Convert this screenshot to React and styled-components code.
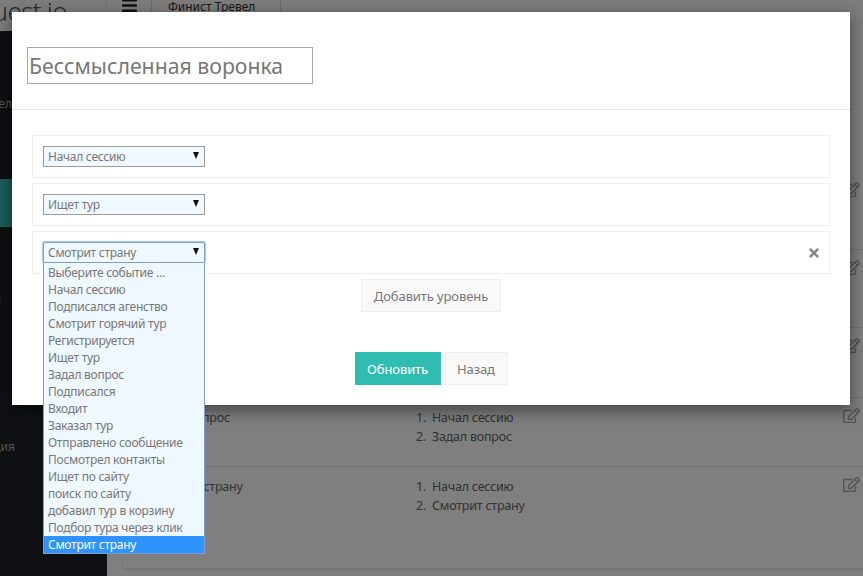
import React from "react";
import styled, { createGlobalStyle } from "styled-components";
import { FaBars, FaRegEdit, FaTimes } from "react-icons/fa";

const Global = createGlobalStyle`
  html, body { margin: 0; padding: 0; height: 100%; overflow: hidden; background: #fff; }
  body { font-family: "Noto Sans", "Open Sans", sans-serif; color: #777; }
  * { box-sizing: border-box; }
`;

const Page = styled.div`
  position: relative;
  width: 863px;
  height: 576px;
  overflow: hidden;
  display: flex;
  flex-direction: column;
  background: #fff;
`;
const Header = styled.header`
  height: 31px;
  flex: none;
  display: flex;
  align-items: stretch;
  background: #fafafa;
`;
const Logo = styled.div`
  width: 107px;
  flex: none;
  overflow: hidden;
  display: flex;
  justify-content: flex-end;
  align-items: flex-start;
  padding-right: 39px;
  font-size: 26px;
  line-height: 22px;
  font-weight: 300;
  letter-spacing: -0.6px;
  color: #555;
  white-space: nowrap;
  border-right: 1px solid #e6e6e6;
`;
const Burger = styled.div`
  width: 45px;
  flex: none;
  display: flex;
  justify-content: center;
  border-right: 1px solid #ddd;
  font-size: 17px;
  color: #222;
  line-height: 0;
  svg { margin-top: -3px; }
`;
const Tab = styled.div`
  width: 129px;
  flex: none;
  padding-left: 16px;
  font-size: 12px;
  line-height: 14px;
  color: #333;
  border-right: 1px solid #ddd;
`;
const Body = styled.div`
  flex: 1;
  display: flex;
  min-height: 0;
`;
const Sidebar = styled.aside`
  width: 107px;
  flex: none;
  background: #1c2028;
  padding-top: 66px;
  display: flex;
  flex-direction: column;
`;
const SideItem = styled.div`
  height: ${(p) => p.$h}px;
  flex: none;
  padding-right: ${(p) => p.$pr || 0}px;
  background: ${(p) => (p.$active ? "#33bcb1" : "transparent")};
  color: #aaa;
  font-size: 12px;
  line-height: ${(p) => p.$lh || 16}px;
  white-space: nowrap;
  overflow: hidden;
`;
const Content = styled.main`
  flex: 1;
  padding: 141px 0 0 15px;
  background: #fff;
  min-width: 0;
`;
const Card = styled.section`
  height: 399px;
  background: #fff;
  border-left: 1px solid #f2f2f2;
  border-bottom: 2px solid #f0f0f0;
`;
const Row = styled.div`
  height: ${(p) => p.$h}px;
  display: grid;
  grid-template-columns: 262px 1fr 20px;
  padding-top: 10px;
  padding-left: 27px;
  border-bottom: 1px solid #e4e4e4;
  font-size: 12.5px;
  letter-spacing: -0.22px;
  color: #666;
`;
const Name = styled.div`
  line-height: 19px;
`;
const Steps = styled.ol`
  margin: 0;
  padding: 0 0 0 17px;
  line-height: 19px;
  li { padding-left: 3px; }
`;
const EditIcon = styled(FaRegEdit)`
  font-size: 17px;
  color: #a8a8a8;
  margin-top: -1px;
`;

const Backdrop = styled.div`
  position: absolute;
  inset: 0;
  background: rgba(0, 0, 0, 0.5);
`;
const Modal = styled.div`
  position: absolute;
  left: 12px;
  top: 12px;
  width: 838px;
  height: 393px;
  background: #fff;
  box-shadow: 0 5px 15px rgba(0, 0, 0, 0.5);
`;
const ModalHead = styled.div`
  height: 98px;
  padding: 35px 15px 0;
  border-bottom: 1px solid #e5e5e5;
`;
const TitleInput = styled.div`
  width: 286px;
  height: 37px;
  border: 1px solid #a9a9a9;
  padding-left: 1px;
  font-size: 21.25px;
  line-height: 35px;
  color: #777;
  white-space: nowrap;
`;
const ModalBody = styled.div`
  padding: 25px 20px 0;
`;
const Level = styled.div`
  position: relative;
  height: 43px;
  margin-bottom: 5px;
  padding: 10px;
  display: flex;
  justify-content: space-between;
  border: 1px solid #eee;
`;
const SelectBox = styled.div`
  position: relative;
  width: 162px;
  height: 21px;
  padding-left: 4px;
  background: #eff7ff;
  border: 1px solid ${(p) => (p.$open ? "#7f9dc9" : "#9c9c9c")};
  ${(p) => p.$open && "box-shadow: 0 0 1px 1px #a9c6ee; border-radius: 2px;"}
  font-size: 12px;
  letter-spacing: -0.27px;
  line-height: 19px;
  color: #777;
  white-space: nowrap;
`;
const Caret = styled.span`
  position: absolute;
  right: 5px;
  top: 5px;
  width: 0;
  height: 0;
  border-left: 3.5px solid transparent;
  border-right: 3.5px solid transparent;
  border-top: 7px solid #111;
`;
const Options = styled.div`
  position: absolute;
  left: 10px;
  top: 31px;
  width: 162px;
  padding-top: 1px;
  background: #eff7ff;
  border: 1px solid #7f9dc9;
  border-top: none;
  z-index: 2;
`;
const Option = styled.div`
  height: 17px;
  padding-left: 4px;
  font-size: 12px;
  letter-spacing: -0.27px;
  line-height: 17px;
  white-space: nowrap;
  color: ${(p) => (p.$selected ? "#fff" : "#777")};
  background: ${(p) => (p.$selected ? "#2e93ff" : "transparent")};
`;
const Remove = styled.div`
  align-self: center;
  margin-right: -2px;
  font-size: 14px;
  line-height: 0;
  color: #888;
`;
const Center = styled.div`
  display: flex;
  justify-content: center;
  gap: 4px;
  margin-top: ${(p) => p.$mt || 0}px;
`;
const Button = styled.div`
  height: 33px;
  width: ${(p) => p.$w}px;
  display: flex;
  align-items: center;
  justify-content: center;
  font-size: 13px;
  letter-spacing: -0.1px;
  border: 1px solid ${(p) => (p.$primary ? "#2fbcb1" : "#eee")};
  background: ${(p) => (p.$primary ? "#2fbcb1" : "#f9f9f9")};
  color: ${(p) => (p.$primary ? "#fff" : "#777")};
`;

const events = [
  "Выберите событие ...",
  "Начал сессию",
  "Подписался агенство",
  "Смотрит горячий тур",
  "Регистрируется",
  "Ищет тур",
  "Задал вопрос",
  "Подписался",
  "Входит",
  "Заказал тур",
  "Отправлено сообщение",
  "Посмотрел контакты",
  "Ищет по сайту",
  "поиск по сайту",
  "добавил тур в корзину",
  "Подбор тура через клик",
  "Смотрит страну",
];

const rows = [
  { h: 78, name: "Ищет тур", steps: ["Начал сессию", "Ищет тур"] },
  { h: 78, name: "Входит", steps: ["Начал сессию", "Входит"] },
  { h: 70, name: "Подписался", steps: ["Начал сессию", "Подписался"] },
  { h: 69, name: "Задал вопрос", steps: ["Начал сессию", "Задал вопрос"] },
  { h: 102, name: "Смотрит страну", steps: ["Начал сессию", "Смотрит страну"] },
];

export default function App() {
  return (
    <Page>
      <Global />
      <Header>
        <Logo>uest.io</Logo>
        <Burger>
          <FaBars />
        </Burger>
        <Tab>Финист Тревел</Tab>
      </Header>
      <Body>
        <Sidebar>
          <SideItem $h={82} $pr={95} $lh={13} dir="rtl">Отчёты и цел</SideItem>
          <SideItem $h={48} $active />
          <SideItem $h={65} />
          <SideItem $h={147} $pr={106} dir="rtl">Воронки</SideItem>
          <SideItem $h={30} $pr={92} dir="rtl">Интеграция</SideItem>
        </Sidebar>
        <Content>
          <Card>
            {rows.map((r) => (
              <Row key={r.name} $h={r.h}>
                <Name>{r.name}</Name>
                <Steps>
                  {r.steps.map((s) => (
                    <li key={s}>{s}</li>
                  ))}
                </Steps>
                <EditIcon />
              </Row>
            ))}
          </Card>
        </Content>
      </Body>
      <Backdrop />
      <Modal>
        <ModalHead>
          <TitleInput>Бессмысленная воронка</TitleInput>
        </ModalHead>
        <ModalBody>
          <Level>
            <SelectBox>
              Начал сессию
              <Caret />
            </SelectBox>
          </Level>
          <Level>
            <SelectBox>
              Ищет тур
              <Caret />
            </SelectBox>
          </Level>
          <Level>
            <SelectBox $open>
              Смотрит страну
              <Caret />
            </SelectBox>
            <Remove>
              <FaTimes />
            </Remove>
            <Options>
              {events.map((e) => (
                <Option key={e} $selected={e === "Смотрит страну"}>
                  {e}
                </Option>
              ))}
            </Options>
          </Level>
          <Center>
            <Button $w={140}>Добавить уровень</Button>
          </Center>
          <Center $mt={40}>
            <Button $w={86} $primary>Обновить</Button>
            <Button $w={63}>Назад</Button>
          </Center>
        </ModalBody>
      </Modal>
    </Page>
  );
}
